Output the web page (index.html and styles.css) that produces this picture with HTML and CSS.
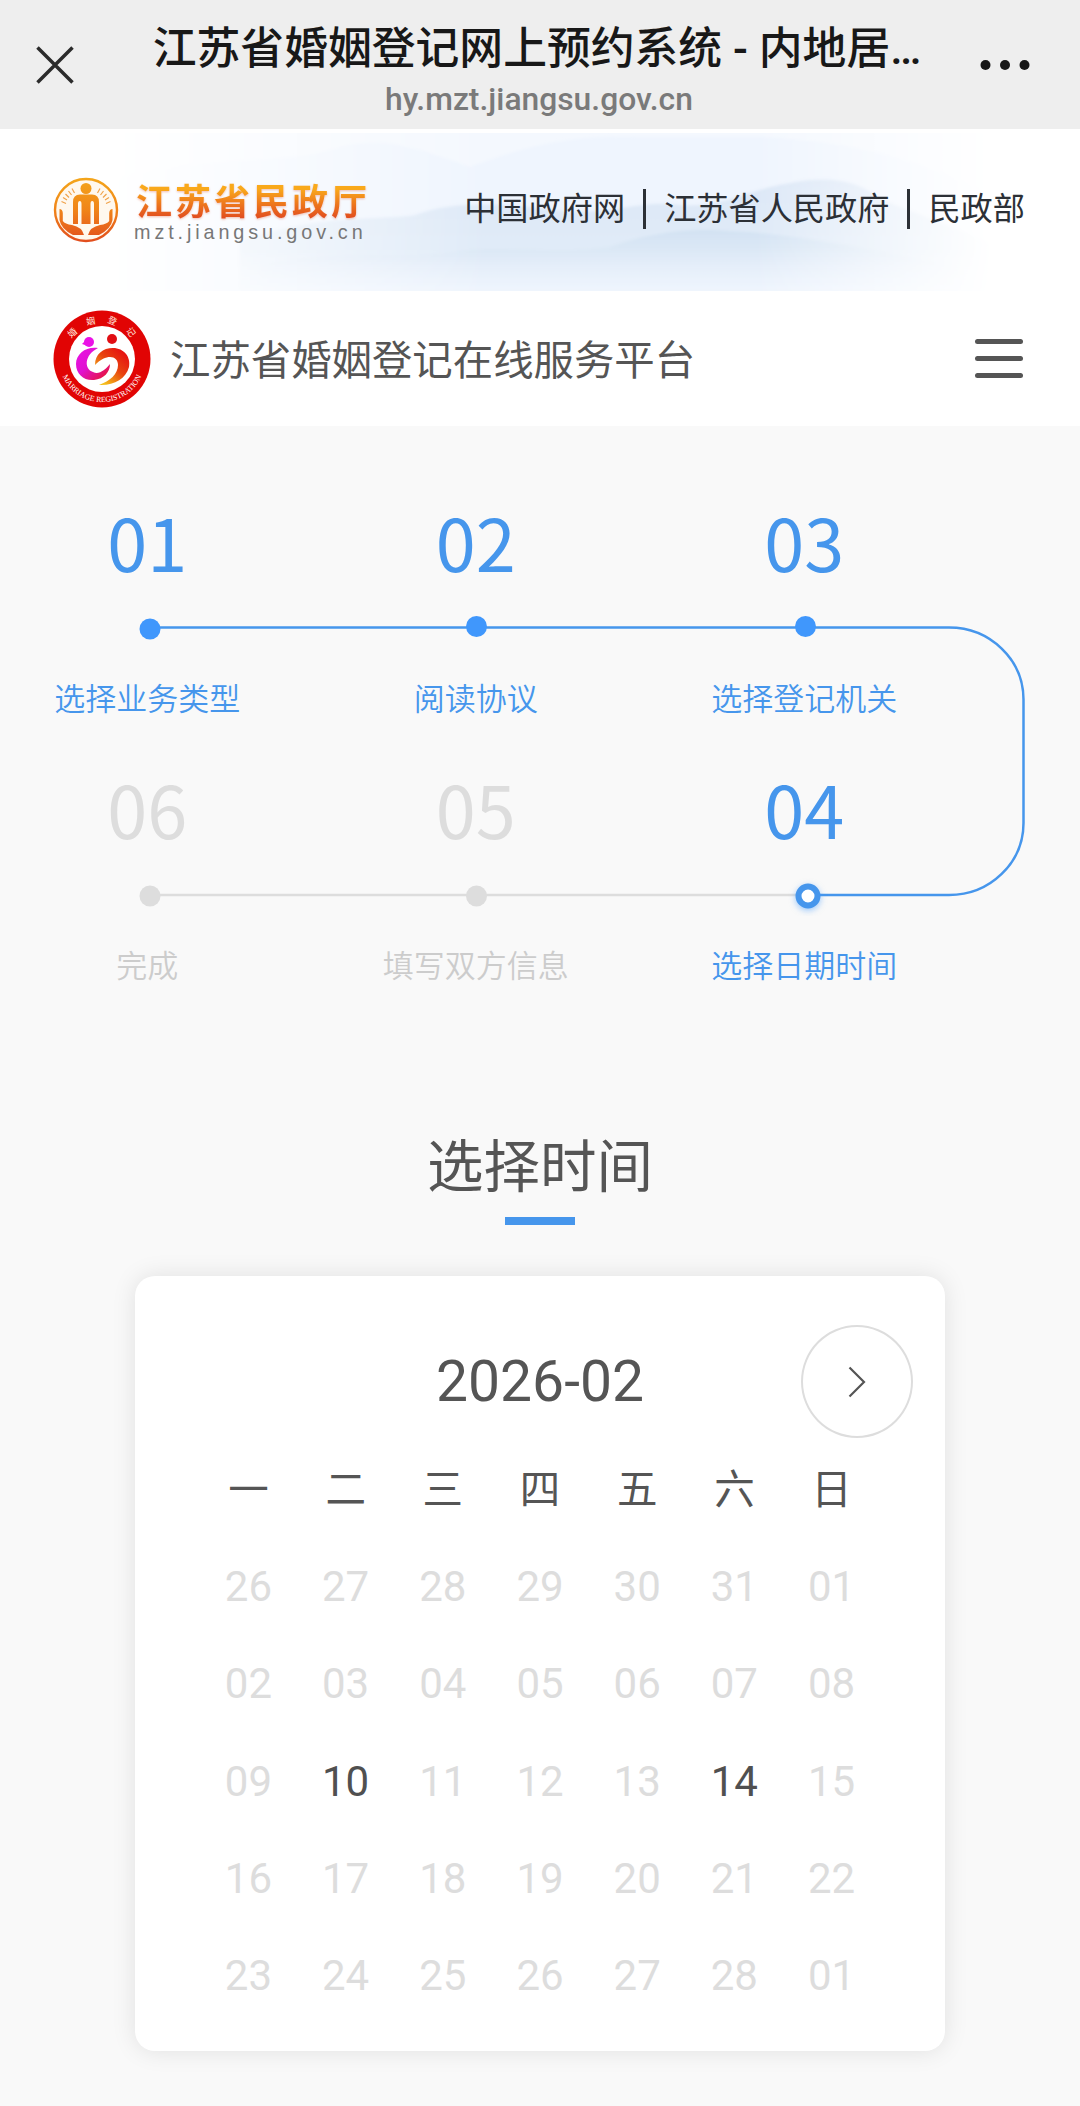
FILE: index.html
```html
<!DOCTYPE html>
<html lang="zh-CN">
<head>
    <meta charset="UTF-8">
    <meta name="viewport" content="width=device-width, initial-scale=1.0">
    <title>江苏省婚姻登记网上预约系统</title>
    <link rel="stylesheet" href="styles.css">
</head>
<body>
    <header class="app-bar">
        <svg class="close-icon" viewBox="0 0 38 38">
            <path d="M1.5 1.5L36.5 36.5M36.5 1.5L1.5 36.5"/>
        </svg>
        <div class="app-title">
            <h1>江苏省婚姻登记网上预约系统 - 内地居…</h1>
            <span class="app-url">hy.mzt.jiangsu.gov.cn</span>
        </div>
        <svg class="more-icon" viewBox="0 0 50 12">
            <circle cx="5.5" cy="6" r="5"/>
            <circle cx="25" cy="6" r="5"/>
            <circle cx="44.5" cy="6" r="5"/>
        </svg>
    </header>

    <div class="banner">
        <svg class="banner-bg" viewBox="0 0 1080 162" preserveAspectRatio="none">
            <defs>
                <linearGradient id="fade" x1="0" x2="1" y1="0" y2="0">
                    <stop offset="0.1" stop-color="#fff" stop-opacity="0"/>
                    <stop offset="0.45" stop-color="#fff"/>
                    <stop offset="0.7" stop-color="#fff"/>
                    <stop offset="0.92" stop-color="#fff" stop-opacity="0"/>
                </linearGradient>
                <linearGradient id="hill" x1="0" x2="0" y1="0" y2="1">
                    <stop offset="0" stop-color="#d3e1f3"/>
                    <stop offset="0.6" stop-color="#dae7f5"/>
                    <stop offset="1" stop-color="#eef3fc" stop-opacity="0.3"/>
                </linearGradient>
                <linearGradient id="mist" x1="0" x2="0" y1="0" y2="1">
                    <stop offset="0" stop-color="#c9dcee"/>
                    <stop offset="1" stop-color="#e9f0fb" stop-opacity="0"/>
                </linearGradient>
                <mask id="banner-mask"><rect width="1080" height="162" fill="url(#fade)"/></mask>
                <filter id="soft"><feGaussianBlur stdDeviation="1.5"/></filter>
            </defs>
            <g mask="url(#banner-mask)">
                <rect y="4" width="1080" height="158" fill="#f4f8fe"/>
                <g filter="url(#soft)">
                    <path d="M80 60C200 20 280 40 340 18C380 8 410 16 470 38C520 20 560 6 640 8H760C840 12 900 24 980 60V162H80Z" fill="#edf3fd" opacity="0.7"/>
                    <path d="M240 112C320 84 380 92 415 86C450 72 500 74 550 80C600 90 640 70 680 76C720 80 750 60 790 54C830 46 860 52 880 70C930 90 990 110 1040 140V168H240Z" fill="url(#hill)" opacity="0.7"/>
                    <path d="M260 136C340 118 400 132 460 122C500 116 560 126 610 118C650 104 690 98 730 102C780 104 850 116 960 138V160H260Z" fill="url(#mist)" opacity="0.6"/>
                </g>
            </g>
        </svg>
        <div class="brand">
            <svg class="brand-logo" viewBox="0 0 66 66">
                <defs>
                    <linearGradient id="gold" gradientUnits="userSpaceOnUse" x1="0" x2="0" y1="0" y2="66">
                        <stop offset="0" stop-color="#f4a71b"/>
                        <stop offset="0.5" stop-color="#f08419"/>
                        <stop offset="1" stop-color="#e14b1e"/>
                    </linearGradient>
                </defs>
                <circle cx="33" cy="33" r="31" fill="#fff8ee" stroke="url(#gold)" stroke-width="2.4"/>
                <g fill="url(#gold)">
                    <circle cx="33" cy="11.5" r="5.5"/>
                    <path d="M20 47V25Q20 17.500 27 17.500H39Q46 17.500 46 25V47H41V27Q41 24 39.200 24Q37.500 24 37.500 27V47H28.500V27Q28.500 24 26.800 24Q25 24 25 27V47Z"/>
                    <path d="M6.500 32Q9.500 32 9.800 36V44Q12 47 19 48Q29 50 31 58H20Q8 52 6.500 43Z"/>
                    <path d="M59.500 32Q56.500 32 56.200 36V44Q54 47 47 48Q37 50 35 58H46Q58 52 59.500 43Z"/>
                </g>
                <path d="M19 11.500L21.500 16M15.500 14L18.500 18M12.500 17L16 20.500M10 20.500L14 23M8.500 24.500L13 26.500M47 11.500L44.500 16M50.500 14L47.500 18M53.500 17L50 20.500M56 20.500L52 23M57.500 24.500L53 26.500" stroke="#f0a24a" stroke-width="1.200" fill="none"/>
            </svg>
            <div class="brand-text">
                <span class="brand-name">江苏省民政厅</span>
                <span class="brand-url">mzt.jiangsu.gov.cn</span>
            </div>
        </div>
        <nav class="gov-links">
            <a>中国政府网</a>
            <a>江苏省人民政府</a>
            <a>民政部</a>
        </nav>
    </div>

    <div class="platform">
        <svg class="emblem" viewBox="0 0 98 98">
            <defs>
                <path id="arc-top" d="M13 49A36 36 0 0 1 85 49"/>
                <path id="arc-bottom" d="M6 49A43 43 0 0 0 92 49"/>
                <linearGradient id="flame" x1="0.9" x2="0.2" y1="0.1" y2="0.9">
                    <stop offset="0" stop-color="#e60d12"/>
                    <stop offset="0.5" stop-color="#e8450f"/>
                    <stop offset="1" stop-color="#f5c01c"/>
                </linearGradient>
                <linearGradient id="pink" x1="0" x2="1" y1="0" y2="1">
                    <stop offset="0" stop-color="#ea12e6"/>
                    <stop offset="0.45" stop-color="#e011d0"/>
                    <stop offset="1" stop-color="#e8141c"/>
                </linearGradient>
            </defs>
            <circle cx="49" cy="49" r="48.500" fill="#e10404"/>
            <circle cx="49" cy="49" r="33" fill="#fff"/>
            <text class="emblem-cn"><textPath href="#arc-top" startOffset="54%" text-anchor="middle">婚姻登记</textPath></text>
            <text class="emblem-en"><textPath href="#arc-bottom" startOffset="50%" text-anchor="middle">MARRIAGE REGISTRATION</textPath></text>
            <circle cx="36" cy="32" r="5" fill="#ea12e6"/>
            <path d="M29 34L35 28V36Z" fill="#ea12e6"/>
            <circle cx="59" cy="29" r="5" fill="#e10e14"/>
            <path d="M45 38C34 36 23 43 23 54C23 64 31 71 41 70C51 69 57 62 57 54C52 60 46 65 40 62C31 59 31 45 45 38Z" fill="url(#pink)"/>
            <path d="M42 55C42 44 50 38 60 38C71 38 78 47 76 57C73 69 60 76 46 75C57 71 65 64 65 55C65 46 54 43 42 55Z" fill="url(#flame)"/>
        </svg>
        <h2>江苏省婚姻登记在线服务平台</h2>
        <div class="menu-btn">
            <span></span>
            <span></span>
            <span></span>
        </div>
    </div>

    <main>
        <section class="steps">
            <svg class="steps-line" viewBox="0 0 1080 320">
                <g fill="none" stroke-width="2.500">
                    <path class="line-off" d="M150 299H806"/>
                    <path class="line-on" d="M150 31.500H949A74.500 72 0 0 1 1023.500 103.500V227A74.500 72 0 0 1 949 299H806"/>
                </g>
                <circle class="dot-on" cx="150" cy="33" r="10.500"/>
                <circle class="dot-on" cx="476.500" cy="30.500" r="10.500"/>
                <circle class="dot-on" cx="805.500" cy="30.500" r="10.500"/>
                <circle class="dot-off" cx="150" cy="300" r="10.500"/>
                <circle class="dot-off" cx="476.500" cy="300" r="10.500"/>
                <circle class="dot-now" cx="808" cy="300" r="9.500"/>
            </svg>
            <div class="step active"><b>01</b><span>选择业务类型</span></div>
            <div class="step active"><b>02</b><span>阅读协议</span></div>
            <div class="step active"><b>03</b><span>选择登记机关</span></div>
            <div class="step"><b>06</b><span>完成</span></div>
            <div class="step"><b>05</b><span>填写双方信息</span></div>
            <div class="step active"><b>04</b><span>选择日期时间</span></div>
        </section>

        <h3 class="section-title">选择时间</h3>

        <section class="calendar">
            <div class="calendar-head">
                <span class="month">2026-02</span>
                <button class="next" type="button">
                    <svg viewBox="0 0 18 32"><path d="M1.500 1.500L16 16L1.500 30.500"/></svg>
                </button>
            </div>
            <div class="week">
                <span>一</span><span>二</span><span>三</span><span>四</span><span>五</span><span>六</span><span>日</span>
            </div>
            <div class="days">
                <span>26</span><span>27</span><span>28</span><span>29</span><span>30</span><span>31</span><span>01</span>
                <span>02</span><span>03</span><span>04</span><span>05</span><span>06</span><span>07</span><span>08</span>
                <span>09</span><span class="open">10</span><span>11</span><span>12</span><span>13</span><span class="open">14</span><span>15</span>
                <span>16</span><span>17</span><span>18</span><span>19</span><span>20</span><span>21</span><span>22</span>
                <span>23</span><span>24</span><span>25</span><span>26</span><span>27</span><span>28</span><span>01</span>
            </div>
        </section>
    </main>
</body>
</html>
```

FILE: styles.css
```css
* {
    box-sizing: border-box;
}
body {
    margin: 0;
    height: 2106px;
    overflow: hidden;
    background-color: #f9f9f9;
    font-family: Roboto, "Noto Sans CJK SC", sans-serif;
    color: #555;
}
h1, h2, h3 {
    margin: 0;
    font-weight: 400;
}

/* browser bar */
.app-bar {
    display: flex;
    justify-content: space-between;
    align-items: center;
    height: 129px;
    padding: 0 50px 0 36px;
    background-color: #eee;
}
.close-icon {
    width: 38px;
    height: 38px;
    fill: none;
    stroke: #2b2b2b;
    stroke-width: 3.5;
}
.app-title {
    display: flex;
    flex-direction: column;
    align-items: center;
    padding: 8px 0 0 20px;
    white-space: nowrap;
}
.app-title h1 {
    font-size: 43.8px;
    line-height: 60px;
    font-weight: 500;
    color: #181818;
}
.app-url {
    padding-left: 4px;
    font-size: 31.8px;
    line-height: 40px;
    font-weight: 500;
    color: #7a7a7a;
}
.more-icon {
    width: 50px;
    height: 12px;
    fill: #181818;
}

/* banner */
.banner {
    position: relative;
    display: flex;
    justify-content: space-between;
    align-items: center;
    height: 162px;
    padding: 0 55px 0 53px;
    background-color: #fff;
}
.banner-bg {
    position: absolute;
    left: 0;
    top: 0;
    width: 100%;
    height: 100%;
}
.brand,
.gov-links {
    position: relative;
    display: flex;
    align-items: center;
}
.brand {
    gap: 15px;
}
.brand-logo {
    width: 66px;
    height: 66px;
}
.brand-text {
    display: flex;
    flex-direction: column;
    padding-top: 6px;
}
.brand-name {
    font-size: 36px;
    line-height: 40px;
    font-weight: 700;
    letter-spacing: 3px;
    padding-left: 2px;
    background: linear-gradient(#f9a91b 15%, #ee7a1d 50%, #e04a1f 90%);
    -webkit-background-clip: text;
    background-clip: text;
    color: transparent;
    filter: drop-shadow(0 1px 1px rgba(224, 74, 31, 0.35));
}
.brand-url {
    margin-top: -2px;
    font-family: "Liberation Sans", Arial, sans-serif;
    font-size: 19.8px;
    line-height: 22px;
    letter-spacing: 3.9px;
    color: #777;
}
.gov-links {
    padding-bottom: 2px;
    font-size: 32.2px;
    line-height: 40px;
    color: #2c3036;
}
.gov-links a + a {
    margin-left: 18px;
    padding-left: 18px;
    border-left: 3px solid #2c3036;
}

/* platform bar */
.platform {
    display: flex;
    align-items: center;
    height: 135px;
    padding: 0 57px 0 53px;
    background-color: #fff;
}
.emblem {
    width: 98px;
    height: 98px;
}
.emblem-cn {
    font-family: "Noto Sans CJK SC", sans-serif;
    font-size: 9px;
    letter-spacing: 11px;
    fill: #ffe4dc;
}
.emblem-en {
    font-family: "Liberation Serif", serif;
    font-size: 7.8px;
    fill: #fff;
}
.platform h2 {
    margin-left: 19px;
    padding-top: 6px;
    font-size: 40.4px;
    line-height: 60px;
}
.menu-btn {
    display: flex;
    flex-direction: column;
    gap: 12px;
    width: 48px;
    margin-left: auto;
}
.menu-btn span {
    height: 5px;
    border-radius: 3px;
    background-color: #555;
}

/* steps */
.steps {
    position: relative;
    display: grid;
    grid-template-columns: repeat(3, 328.5px);
    grid-auto-rows: 267px;
    margin-left: -17px;
    padding-top: 65px;
}
.steps-line {
    position: absolute;
    left: 17px;
    top: 170px;
    width: 1080px;
    height: 320px;
}
.line-on {
    stroke: #4696ec;
}
.line-off {
    stroke: #ddd;
}
.dot-on {
    fill: #4097fc;
}
.dot-off {
    fill: #ddd;
}
.dot-now {
    fill: #fff;
    stroke: #4696ec;
    stroke-width: 6;
    filter: drop-shadow(0 2px 3px rgba(64, 151, 252, 0.5));
}
.step {
    position: relative;
    display: flex;
    flex-direction: column;
    align-items: center;
    font-family: "Noto Sans CJK SC", sans-serif;
    color: #ddd;
}
.step b {
    font-size: 72px;
    line-height: 100px;
    font-weight: 400;
}
.step span {
    margin-top: 86px;
    font-size: 31px;
    line-height: 40px;
    font-weight: 350;
    color: #ccc;
}
.step.active,
.step.active span {
    color: #4696ec;
}

/* calendar */
.section-title {
    display: flex;
    flex-direction: column;
    align-items: center;
    margin-top: 103px;
    font-size: 56.5px;
    line-height: 80px;
}
.section-title::after {
    content: "";
    width: 70px;
    height: 8px;
    margin-top: 9px;
    background-color: #4696ec;
}
.calendar {
    width: 810px;
    height: 775px;
    margin: 51px auto 0;
    padding: 49px 32px 0;
    border-radius: 20px;
    background-color: #fff;
    box-shadow: 0 0 24px rgba(0, 0, 0, 0.1);
}
.calendar-head {
    display: grid;
    grid-template-columns: 112px 1fr 112px;
    align-items: center;
    height: 113px;
}
.month {
    grid-column: 2;
    text-align: center;
    font-size: 57px;
}
.next {
    display: flex;
    justify-content: center;
    align-items: center;
    width: 112px;
    height: 113px;
    padding: 0;
    border: 2px solid #ddd;
    border-radius: 50%;
    background: none;
}
.next svg {
    width: 18px;
    height: 32px;
    fill: none;
    stroke: #555;
    stroke-width: 2.2;
}
.week,
.days {
    display: grid;
    grid-template-columns: repeat(7, 97.2px);
    grid-auto-rows: 97.2px;
    justify-content: center;
    align-items: center;
    text-align: center;
}
.week {
    font-size: 40.5px;
}
.days {
    margin-top: 3px;
    font-size: 42px;
    color: #ddd;
}
.days .open {
    color: #505050;
}
```
